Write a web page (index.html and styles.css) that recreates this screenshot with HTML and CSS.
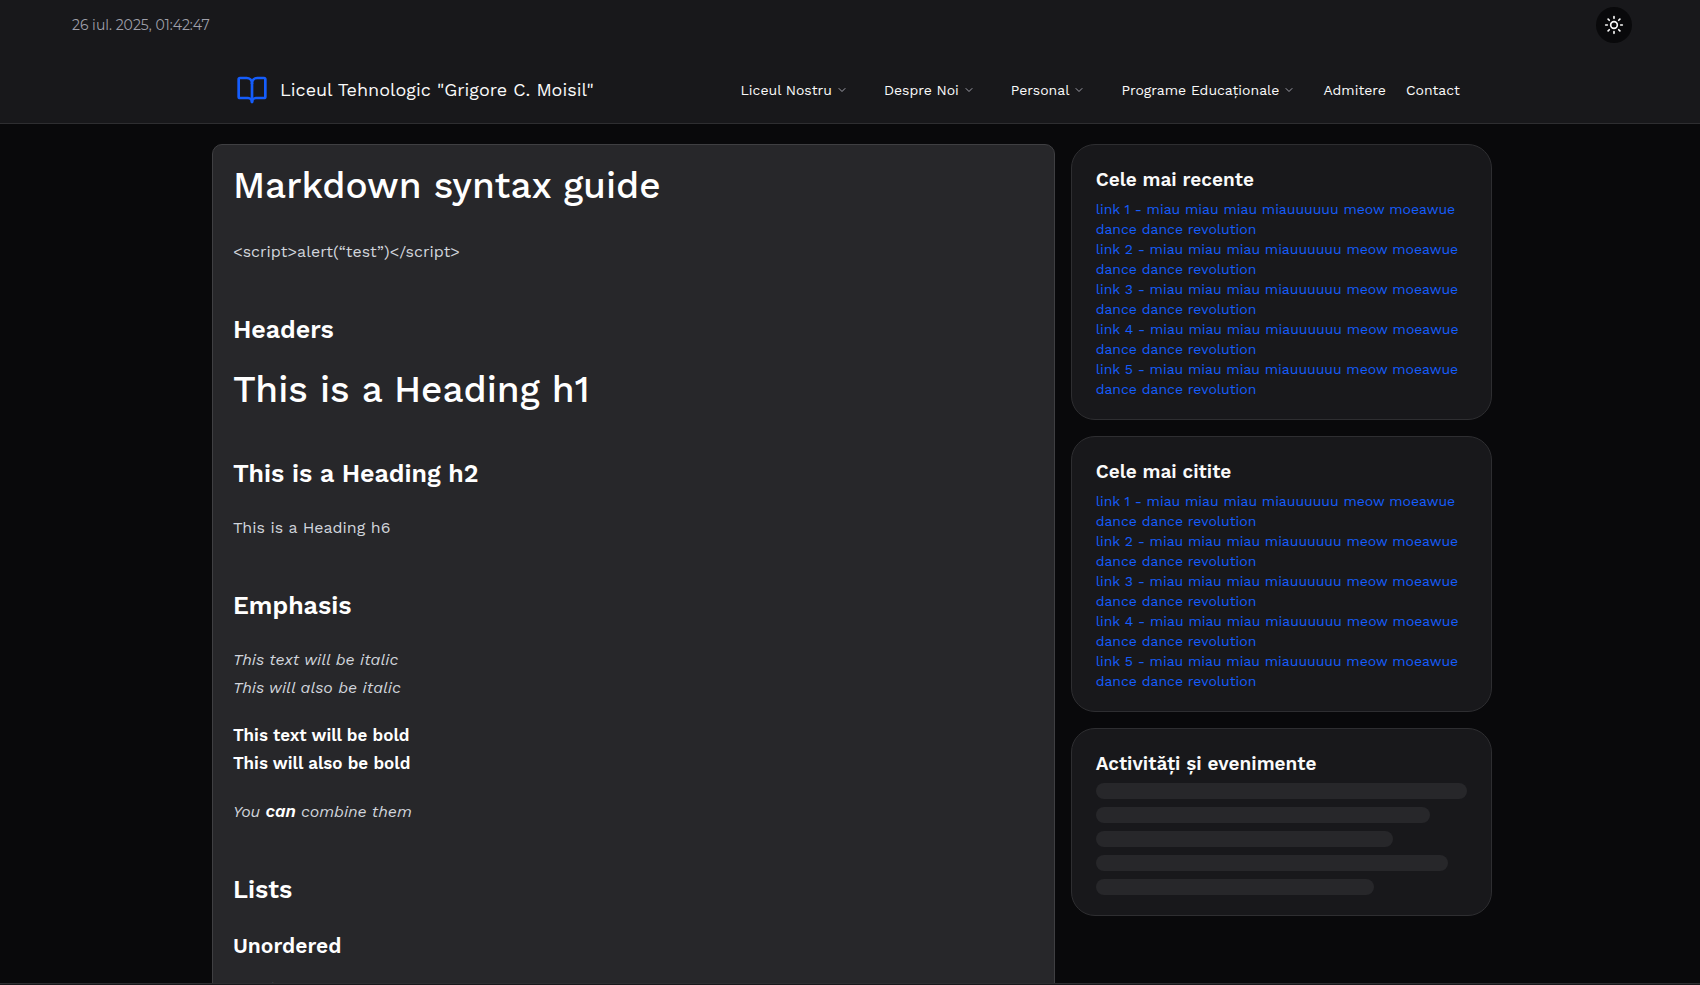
FILE: index.html
```html
<!DOCTYPE html>
<html lang="ro">
<head>
<meta charset="utf-8">
<meta name="viewport" content="width=device-width, initial-scale=1">
<title>Liceul Tehnologic "Grigore C. Moisil"</title>
<link rel="stylesheet" href="styles.css">
</head>
<body>
<header class="site-header">
  <div class="topbar">
    <time class="clock" datetime="2025-07-26T01:42:47">26 iul. 2025, 01:42:47</time>
    <button class="theme-toggle" type="button" aria-label="Schimbă tema">
      <svg class="sun" viewBox="0 0 24 24"><circle cx="12" cy="12" r="4"/><path d="M12 2v2M12 20v2M4.93 4.93l1.41 1.41M17.66 17.66l1.41 1.41M2 12h2M20 12h2M6.34 17.66l-1.41 1.41M19.07 4.93l-1.41 1.41"/></svg>
    </button>
  </div>
  <div class="navbar">
    <a class="brand" href="#">
      <svg class="book" viewBox="0 0 24 24"><path d="M12 7v14"/><path d="M3 18a1 1 0 0 1-1-1V4a1 1 0 0 1 1-1h5a4 4 0 0 1 4 4 4 4 0 0 1 4-4h5a1 1 0 0 1 1 1v13a1 1 0 0 1-1 1h-6a3 3 0 0 0-3 3 3 3 0 0 0-3-3z"/></svg>
      <span>Liceul Tehnologic "Grigore C. Moisil"</span>
    </a>
    <nav class="menu">
      <div class="menu-groups">
        <button class="menu-item" type="button">Liceul Nostru <svg class="chevron" viewBox="0 0 24 24"><path d="m6 9 6 6 6-6"/></svg></button>
        <button class="menu-item" type="button">Despre Noi <svg class="chevron" viewBox="0 0 24 24"><path d="m6 9 6 6 6-6"/></svg></button>
        <button class="menu-item" type="button">Personal <svg class="chevron" viewBox="0 0 24 24"><path d="m6 9 6 6 6-6"/></svg></button>
        <button class="menu-item" type="button">Programe Educaționale <svg class="chevron" viewBox="0 0 24 24"><path d="m6 9 6 6 6-6"/></svg></button>
      </div>
      <div class="menu-links">
        <a href="#">Admitere</a>
        <a href="#">Contact</a>
      </div>
    </nav>
  </div>
</header>
<main class="page">
  <article class="prose">
    <h1>Markdown syntax guide</h1>
    <p>&lt;script&gt;alert(“test”)&lt;/script&gt;</p>
    <h2>Headers</h2>
    <h1>This is a Heading h1</h1>
    <h2>This is a Heading h2</h2>
    <p>This is a Heading h6</p>
    <h2>Emphasis</h2>
    <p><em>This text will be italic</em><br><em>This will also be italic</em></p>
    <p><strong>This text will be bold</strong><br><strong>This will also be bold</strong></p>
    <p><em>You <strong>can</strong> combine them</em></p>
    <h2>Lists</h2>
    <h3>Unordered</h3>
    <ul><li>Item 1</li></ul>
  </article>
  <aside class="sidebar">
    <section class="card">
      <h2>Cele mai recente</h2>
      <ul>
        <li><a href="#">link 1 - miau miau miau miauuuuuu meow moeawue dance dance revolution</a></li>
        <li><a href="#">link 2 - miau miau miau miauuuuuu meow moeawue dance dance revolution</a></li>
        <li><a href="#">link 3 - miau miau miau miauuuuuu meow moeawue dance dance revolution</a></li>
        <li><a href="#">link 4 - miau miau miau miauuuuuu meow moeawue dance dance revolution</a></li>
        <li><a href="#">link 5 - miau miau miau miauuuuuu meow moeawue dance dance revolution</a></li>
      </ul>
    </section>
    <section class="card">
      <h2>Cele mai citite</h2>
      <ul>
        <li><a href="#">link 1 - miau miau miau miauuuuuu meow moeawue dance dance revolution</a></li>
        <li><a href="#">link 2 - miau miau miau miauuuuuu meow moeawue dance dance revolution</a></li>
        <li><a href="#">link 3 - miau miau miau miauuuuuu meow moeawue dance dance revolution</a></li>
        <li><a href="#">link 4 - miau miau miau miauuuuuu meow moeawue dance dance revolution</a></li>
        <li><a href="#">link 5 - miau miau miau miauuuuuu meow moeawue dance dance revolution</a></li>
      </ul>
    </section>
    <section class="card">
      <h2>Activități și evenimente</h2>
      <div class="skeleton">
        <span style="width:100%"></span>
        <span style="width:90%"></span>
        <span style="width:80%"></span>
        <span style="width:95%"></span>
        <span style="width:75%"></span>
      </div>
    </section>
  </aside>
</main>
<footer class="site-footer"></footer>
</body>
</html>
```

FILE: styles.css
```css
* { box-sizing: border-box; margin: 0; padding: 0; }
body {
  height: 100vh;
  display: flex;
  flex-direction: column;
  overflow: hidden;
  background: #09090b;
  color: #fafafa;
  font-family: "Work Sans", Inter, "Open Sans", sans-serif;
  font-size: 16px;
}
a { color: inherit; text-decoration: none; }
button { font: inherit; color: inherit; background: none; border: 0; cursor: pointer; }
ul { list-style: none; }
svg { fill: none; stroke: currentColor; stroke-width: 2; stroke-linecap: round; stroke-linejoin: round; flex: none; }

.site-header { flex: none; background: #18181b; border-bottom: 1px solid #2e2e31; }
.topbar { display: flex; align-items: center; justify-content: space-between; height: 50px; padding: 0 68px 0 72px; }
.clock { font-family: Montserrat, Inter, sans-serif; font-size: 14px; font-weight: 400; color: #9f9fa9; }
.theme-toggle { display: flex; align-items: center; justify-content: center; width: 36px; height: 36px; border-radius: 50%; background: #09090b; }
.sun { width: 20px; height: 20px; }
.navbar { display: flex; align-items: center; justify-content: space-between; width: 100%; max-width: 1228px; height: 73px; margin: 0 auto; padding: 6px 4px 0 0; }
.brand { display: flex; align-items: center; gap: 12px; font-size: 18px; }
.book { width: 32px; height: 32px; color: #155dfc; }
.menu { display: flex; align-items: center; gap: 28px; font-size: 14px; }
.menu-groups { display: flex; gap: 36px; }
.menu-item { display: flex; align-items: center; gap: 4px; white-space: nowrap; }
.menu-links { display: flex; gap: 20px; }
.chevron { width: 12px; height: 12px; color: #9f9fa9; }

.page {
  flex: 1;
  min-height: 0;
  overflow: hidden;
  display: grid;
  grid-template-columns: minmax(0, 2fr) minmax(0, 1fr);
  align-items: start;
  gap: 16px;
  width: 100%;
  max-width: 1284px;
  margin: 0 auto;
  padding: 20px 0 0 4px;
}
.prose { padding: 21px 20px 40px; background: #27272a; border: 1px solid #3f3f42; border-radius: 10px; line-height: 28px; color: #d1d5dc; }
.prose h1, .prose h2, .prose h3, .prose strong { color: #fff; }
.prose h1 { font-size: 37px; line-height: 40px; font-weight: 500; margin-bottom: 32px; }
.prose h2 { font-size: 25px; line-height: 32px; font-weight: 600; margin: 48px 0 24px; }
.prose h3 { font-size: 21px; line-height: 32px; font-weight: 600; margin-bottom: 12px; }
.prose p { margin: 20px 0; }
.prose strong { font-size: 17px; line-height: 1; font-weight: 600; }
.prose ul { list-style: disc; padding-left: 32px; }

.sidebar { display: grid; gap: 16px; }
.card { padding: 21px 24px 20px; background: #18181b; border: 1px solid #2e2e31; border-radius: 24px; }
.card h2 { font-size: 19px; line-height: 28px; font-weight: 600; margin-bottom: 5px; }
.card li { font-size: 14px; line-height: 20px; color: #155dfc; }
.skeleton { display: grid; gap: 8px; }
.skeleton span { height: 16px; border-radius: 8px; background: #27272a; }
.site-footer { flex: none; height: 2px; background: #18181b; border-top: 1px solid #2e2e31; }
```
